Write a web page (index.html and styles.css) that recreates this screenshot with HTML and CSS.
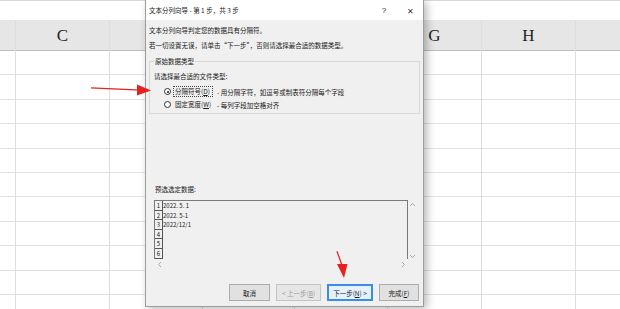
FILE: index.html
```html
<!DOCTYPE html>
<html lang="zh">
<head>
<meta charset="utf-8">
<link rel="stylesheet" href="styles.css">
</head>
<body>
<div class="sheet">
  <div class="fbar"></div>
  <div class="table">
    <div class="col c-b"><div class="hd"></div></div>
    <div class="col c-w"><div class="hd">C</div></div>
    <div class="col c-d"><div class="hd"></div></div>
    <div class="col c-e"><div class="hd"></div></div>
    <div class="col c-f"><div class="hd"></div></div>
    <div class="col c-w"><div class="hd">G</div></div>
    <div class="col c-w"><div class="hd">H</div></div>
    <div class="col c-last"><div class="hd"></div></div>
  </div>
</div>

<div class="dialog">
  <div class="titlebar">
    <span class="title">文本分列向导 - 第 1 步，共 3 步</span>
    <span class="tb-btn help">?</span>
    <span class="tb-btn close">✕</span>
  </div>
  <div class="body">
    <p class="line">文本分列向导判定您的数据具有分隔符。</p>
    <p class="line">若一切设置无误，请单击“下一步”，否则请选择最合适的数据类型。</p>
    <fieldset class="group">
      <legend>原始数据类型</legend>
      <div class="prompt">请选择最合适的文件类型:</div>
      <div class="radio-row first">
        <span class="radio checked"></span>
        <span class="rlabel focus">分隔符号(<u>D</u>)</span>
        <span class="rdesc">- 用分隔字符，如逗号或制表符分隔每个字段</span>
      </div>
      <div class="radio-row">
        <span class="radio"></span>
        <span class="rlabel">固定宽度(<u>W</u>)</span>
        <span class="rdesc">- 每列字段加空格对齐</span>
      </div>
    </fieldset>
    <div class="plabel">预选选定数据:</div>
    <div class="preview">
      <div class="pmain">
        <div class="pbox">
          <div class="nums">
            <span>1</span><span>2</span><span>3</span><span>4</span><span>5</span><span>6</span>
          </div>
          <div class="data">
            <span>2022. 5. 1</span><span>2022. 5-1</span><span>2022/12/1</span>
          </div>
        </div>
        <div class="vscroll">
          <svg width="7" height="5" viewBox="0 0 7 5"><path d="M1 4 L3.5 1.5 L6 4" fill="none" stroke="#a8a8a8" stroke-width="1"/></svg>
          <svg width="7" height="5" viewBox="0 0 7 5"><path d="M1 1 L3.5 3.5 L6 1" fill="none" stroke="#a8a8a8" stroke-width="1"/></svg>
        </div>
      </div>
      <div class="hscroll">
        <svg width="5" height="7" viewBox="0 0 5 7"><path d="M4 1 L1.5 3.5 L4 6" fill="none" stroke="#a8a8a8" stroke-width="1"/></svg>
        <svg width="5" height="7" viewBox="0 0 5 7"><path d="M1 1 L3.5 3.5 L1 6" fill="none" stroke="#a8a8a8" stroke-width="1"/></svg>
      </div>
    </div>
    <div class="buttons">
      <button class="btn b-cancel">取消</button>
      <button class="btn b-prev" disabled>&lt; 上一步(<u>B</u>)</button>
      <button class="btn b-next">下一步(<u>N</u>) &gt;</button>
      <button class="btn b-finish">完成(<u>F</u>)</button>
    </div>
  </div>
</div>

<svg class="arrow arrow-1" width="70" height="16" viewBox="0 0 70 16">
  <path d="M2 3.2 L52 5.6 L52 6.8 L2 4.6 Z" fill="#e8201e"/>
  <path d="M48 0.5 L62 6.5 L48 11.5 Z" fill="#e8201e"/>
</svg>
<svg class="arrow arrow-2" width="16" height="34" viewBox="0 0 16 34">
  <path d="M3.6 1 L9.2 17 L8 17.4 L2.4 1.4 Z" fill="#e8201e"/>
  <path d="M3 14 L13.5 14 L10 28 Z" fill="#e8201e"/>
</svg>
</body>
</html>
```

FILE: styles.css
```css
* { box-sizing: border-box; }
html, body { margin: 0; padding: 0; }
body {
  width: 620px;
  height: 309px;
  overflow: hidden;
  position: relative;
  background: #ffffff;
  font-family: "Noto Sans CJK SC", "Noto Sans", sans-serif;
  color: #1a1a1a;
}

/* ---------- spreadsheet background ---------- */
.sheet { display: flex; flex-direction: column; height: 309px; }
.fbar { height: 20px; background: #ffffff; border-top: 1px solid #d8d8d8; }
.table {
  flex: 1;
  display: flex;
  background-color: #fff;
  background-image: repeating-linear-gradient(to bottom, transparent 0, transparent 23.4px, #e2e2e2 23.4px, #e2e2e2 24.4px);
  background-position: 0 31px;
  background-repeat: no-repeat;
  background-size: 100% 100%;
}
.col { border-right: 1px solid #dedede; }
.c-b { width: 16px; }
.c-w { width: 94px; }
.c-d { width: 93px; }
.c-e { width: 92px; }
.c-f { width: 93px; }
.c-last { flex: 1; border-right: 0; }
.hd {
  height: 31px;
  background: #e6e6e6;
  border-bottom: 1px solid #bdbdbd;
  font-family: "Liberation Serif", serif;
  font-size: 17px;
  line-height: 31px;
  text-align: center;
  color: #222;
}

/* ---------- dialog ---------- */
.dialog {
  position: absolute;
  left: 145px;
  top: 0;
  width: 279px;
  height: 307px;
  background: #f0f0f0;
  border: 1px solid #9c9c9c;
  border-top: 0;
  box-shadow: 3px 2px 8px rgba(0, 0, 0, 0.28);
  font-size: 6.5px;
}
.titlebar {
  height: 20px;
  background: #ffffff;
  display: flex;
  align-items: center;
  padding-left: 3px;
}
.title { flex: 1; }
.tb-btn { width: 26px; text-align: center; color: #333; }
.help { font-family: "Liberation Sans", sans-serif; font-size: 8px; }
.close { font-size: 8px; }

.body { padding: 3px 3px 0 3px; }
.line { margin: 0; line-height: 15px; white-space: nowrap; }

.group {
  margin: 4px 0 0 0;
  padding: 4px 4px 3px 4px;
  border: 1px solid #d8d8d8;
  height: 57px;
  min-inline-size: 0;
}
.group legend {
  padding: 0 1px;
  line-height: 9px;
}
.prompt { line-height: 9px; margin-top: 2px; }
.radio-row {
  display: flex;
  align-items: center;
  height: 13px;
  padding-left: 10px;
  white-space: nowrap;
}
.radio-row.first { margin-top: 4px; }
.radio {
  width: 7px;
  height: 7px;
  border: 1px solid #333;
  border-radius: 50%;
  background: #fff;
  position: relative;
  flex: none;
}
.radio.checked::after {
  content: "";
  position: absolute;
  left: 1.5px;
  top: 1.5px;
  width: 2px;
  height: 2px;
  border-radius: 50%;
  background: #1a1a1a;
}
.rlabel {
  margin-left: 2px;
  width: 40px;
  flex: none;
  padding: 0 1px;
  line-height: 9px;
  border: 1px dotted transparent;
}
.rlabel.focus { border-color: #444; }
.rdesc { margin-left: 4px; }

.plabel {
  margin: 71px 0 0 6px;
  line-height: 9px;
}
.preview {
  margin: 6px 0 0 5px;
  width: 263px;
}
.pmain { display: flex; }
.pbox {
  width: 254px;
  height: 59px;
  border-top: 1px solid #7a7a7a;
  border-left: 1px solid #7a7a7a;
  border-right: 1px solid #7a7a7a;
  display: flex;
  font-size: 6px;
}
.nums {
  width: 8px;
  display: flex;
  flex-direction: column;
  border-right: 1px solid #555;
}
.nums span {
  height: 9.6px;
  line-height: 9px;
  text-align: center;
  border-bottom: 1px solid #555;
}
.data { display: flex; flex-direction: column; }
.data span { height: 9.6px; line-height: 9.6px; }
.vscroll {
  width: 9px;
  display: flex;
  flex-direction: column;
  justify-content: space-between;
  align-items: center;
  padding: 2px 0 0 0;
}
.hscroll {
  width: 254px;
  height: 11px;
  display: flex;
  justify-content: space-between;
  align-items: center;
  padding: 0 2px 0 3px;
}

.buttons {
  display: flex;
  justify-content: flex-end;
  gap: 6px;
  margin-top: 14px;
  padding-right: 1px;
}
.btn {
  height: 17px;
  padding: 0;
  font-family: "Noto Sans CJK SC", sans-serif;
  font-size: 6.5px;
  color: #1a1a1a;
  background: #e1e1e1;
  border: 1px solid #adadad;
  border-radius: 0;
  white-space: nowrap;
}
.b-cancel { width: 41px; }
.b-prev { width: 45px; color: #9a9a9a; background: #e6e6e6; border-color: #c4c4c4; }
.b-next { width: 46px; border: 2px solid #3a8ee6; background: #e5f1fb; }
.b-finish { width: 40px; }

/* ---------- annotation arrows ---------- */
.arrow { position: absolute; }
.arrow-1 { left: 89px; top: 84px; }
.arrow-2 { left: 334px; top: 250px; }
```
